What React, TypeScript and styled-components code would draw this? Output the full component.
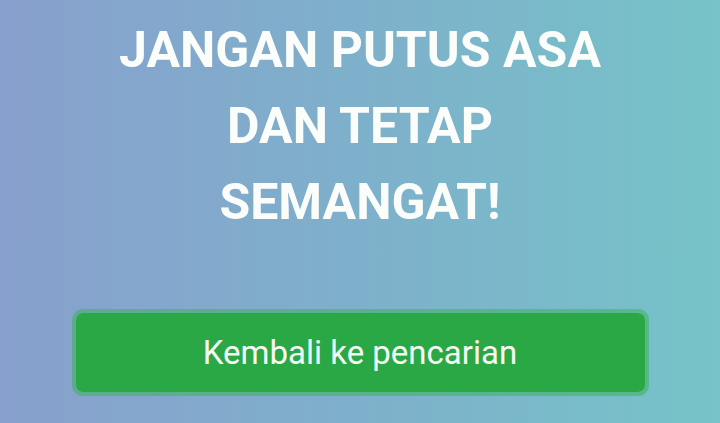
import React from 'react';
import styled, { createGlobalStyle } from 'styled-components';

const GlobalStyle = createGlobalStyle`
  html, body {
    margin: 0;
    padding: 0;
  }
  body {
    font-family: Roboto, "Liberation Sans", sans-serif;
  }
`;

const Screen = styled.div`
  width: 100%;
  height: 423px;
  box-sizing: border-box;
  background: linear-gradient(90deg, #88a0cd 0%, #7eb0cb 50%, #76c3c8 100%);
  display: flex;
  flex-direction: column;
  align-items: center;
  padding-top: 12px;
`;

const Headline = styled.h1`
  margin: 0;
  max-width: 520px;
  color: #fbfdfb;
  font-size: 50px;
  font-weight: 700;
  line-height: 76px;
  text-align: center;
`;

const BackButton = styled.button`
  margin-top: 69px;
  width: 577px;
  height: 87px;
  box-sizing: border-box;
  border: 4px solid rgba(60, 178, 90, 0.55);
  background-clip: padding-box;
  background-color: #2ba846;
  border-radius: 11px;
  color: #f4fbf4;
  font-family: Roboto, "Liberation Sans", sans-serif;
  font-size: 33px;
  font-weight: 400;
  cursor: pointer;
  padding: 0;
`;

export default function App() {
  return (
    <>
      <GlobalStyle />
      <Screen>
        <Headline>JANGAN PUTUS ASA DAN TETAP SEMANGAT!</Headline>
        <BackButton>Kembali ke pencarian</BackButton>
      </Screen>
    </>
  );
}
